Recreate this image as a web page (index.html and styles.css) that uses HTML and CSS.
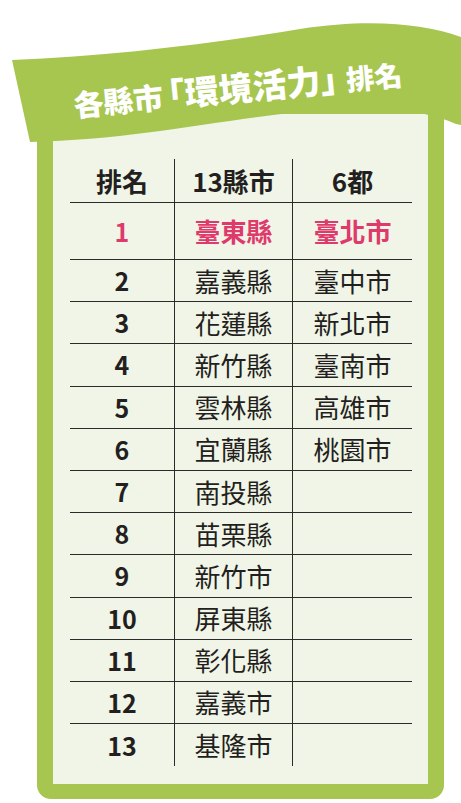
FILE: index.html
```html
<!DOCTYPE html>
<html lang="zh-Hant">
<head>
<meta charset="utf-8">
<title>各縣市「環境活力」排名</title>
<link rel="stylesheet" href="styles.css">
</head>
<body>
<div class="page">
  <div class="card">
    <div class="table">
      <div class="row head">
        <div class="cell">排名</div>
        <div class="cell">13縣市</div>
        <div class="cell">6都</div>
      </div>
      <div class="row first">
        <div class="cell num">1</div>
        <div class="cell">臺東縣</div>
        <div class="cell">臺北市</div>
      </div>
      <div class="row"><div class="cell num">2</div><div class="cell">嘉義縣</div><div class="cell">臺中市</div></div>
      <div class="row"><div class="cell num">3</div><div class="cell">花蓮縣</div><div class="cell">新北市</div></div>
      <div class="row"><div class="cell num">4</div><div class="cell">新竹縣</div><div class="cell">臺南市</div></div>
      <div class="row"><div class="cell num">5</div><div class="cell">雲林縣</div><div class="cell">高雄市</div></div>
      <div class="row"><div class="cell num">6</div><div class="cell">宜蘭縣</div><div class="cell">桃園市</div></div>
      <div class="row"><div class="cell num">7</div><div class="cell">南投縣</div><div class="cell"></div></div>
      <div class="row"><div class="cell num">8</div><div class="cell">苗栗縣</div><div class="cell"></div></div>
      <div class="row"><div class="cell num">9</div><div class="cell">新竹市</div><div class="cell"></div></div>
      <div class="row"><div class="cell num">10</div><div class="cell">屏東縣</div><div class="cell"></div></div>
      <div class="row"><div class="cell num">11</div><div class="cell">彰化縣</div><div class="cell"></div></div>
      <div class="row"><div class="cell num">12</div><div class="cell">嘉義市</div><div class="cell"></div></div>
      <div class="row"><div class="cell num">13</div><div class="cell">基隆市</div><div class="cell"></div></div>
    </div>
  </div>
  <div class="banner">
    <svg class="ribbon" width="461" height="150" viewBox="0 0 461 150">
      <path d="M12,60 C110,56 210,44 300,29 C370,18 425,24 461,37 L461,125 L456,124 C425,110 380,104 300,112 C220,120 130,140 30,142 Z" fill="#a7c650"/>
    </svg>
    <div class="title"><span class="t-sm">各縣市</span><span class="t-lg"><span class="br">「</span>環境活力<span class="br">」</span></span><span class="t-xs">排名</span></div>
  </div>
</div>
</body>
</html>
```

FILE: styles.css
```css
html, body {
  margin: 0;
  padding: 0;
  background: #ffffff;
}
body {
  font-family: "Noto Sans CJK TC", "Noto Sans", sans-serif;
  color: #231f20;
}
.page {
  position: relative;
  width: 461px;
  height: 803px;
  overflow: hidden;
}
.card {
  margin: 98px 0 0 37px;
  width: 407px;
  height: 701px;
  box-sizing: border-box;
  border: 16px solid #a7c650;
  border-bottom-width: 15px;
  border-radius: 14px;
  background: #f1f5e7;
  padding: 45px 16px 0 17px;
}
.table {
  display: flex;
  flex-direction: column;
}
.row {
  display: grid;
  grid-template-columns: 104px 118px 120px;
  height: 42.2px;
  border-top: 1px solid #2a2a2a;
  box-sizing: border-box;
}
.row.head {
  height: 43px;
  border-top: none;
  font-weight: 700;
}
.row.first {
  height: 57px;
  color: #de3a6c;
  font-weight: 700;
}
.row:last-child {
  height: 43px;
}
.cell {
  display: flex;
  align-items: center;
  justify-content: center;
  font-size: 26px;
  line-height: 1;
  white-space: nowrap;
}
.cell + .cell {
  border-left: 1.5px solid #2a2a2a;
}
.cell.num {
  font-weight: 700;
  font-size: 25px;
}
.banner {
  position: absolute;
  left: 0;
  top: 0;
  width: 461px;
  height: 150px;
}
.ribbon {
  display: block;
}
.title {
  position: absolute;
  left: 73px;
  top: 70px;
  width: 334px;
  font-size: 34px;
  line-height: 1;
  font-weight: 900;
  color: #ffffff;
  white-space: nowrap;
  transform: rotate(-5.5deg);
  transform-origin: 167px 22px;
}
.t-sm {
  font-size: 30px;
}
.t-lg {
  font-size: 34px;
  margin-left: 5px;
}
.br {
  font-feature-settings: "halt" 1;
}
.t-xs {
  font-size: 28px;
  margin-left: 9px;
}
```
